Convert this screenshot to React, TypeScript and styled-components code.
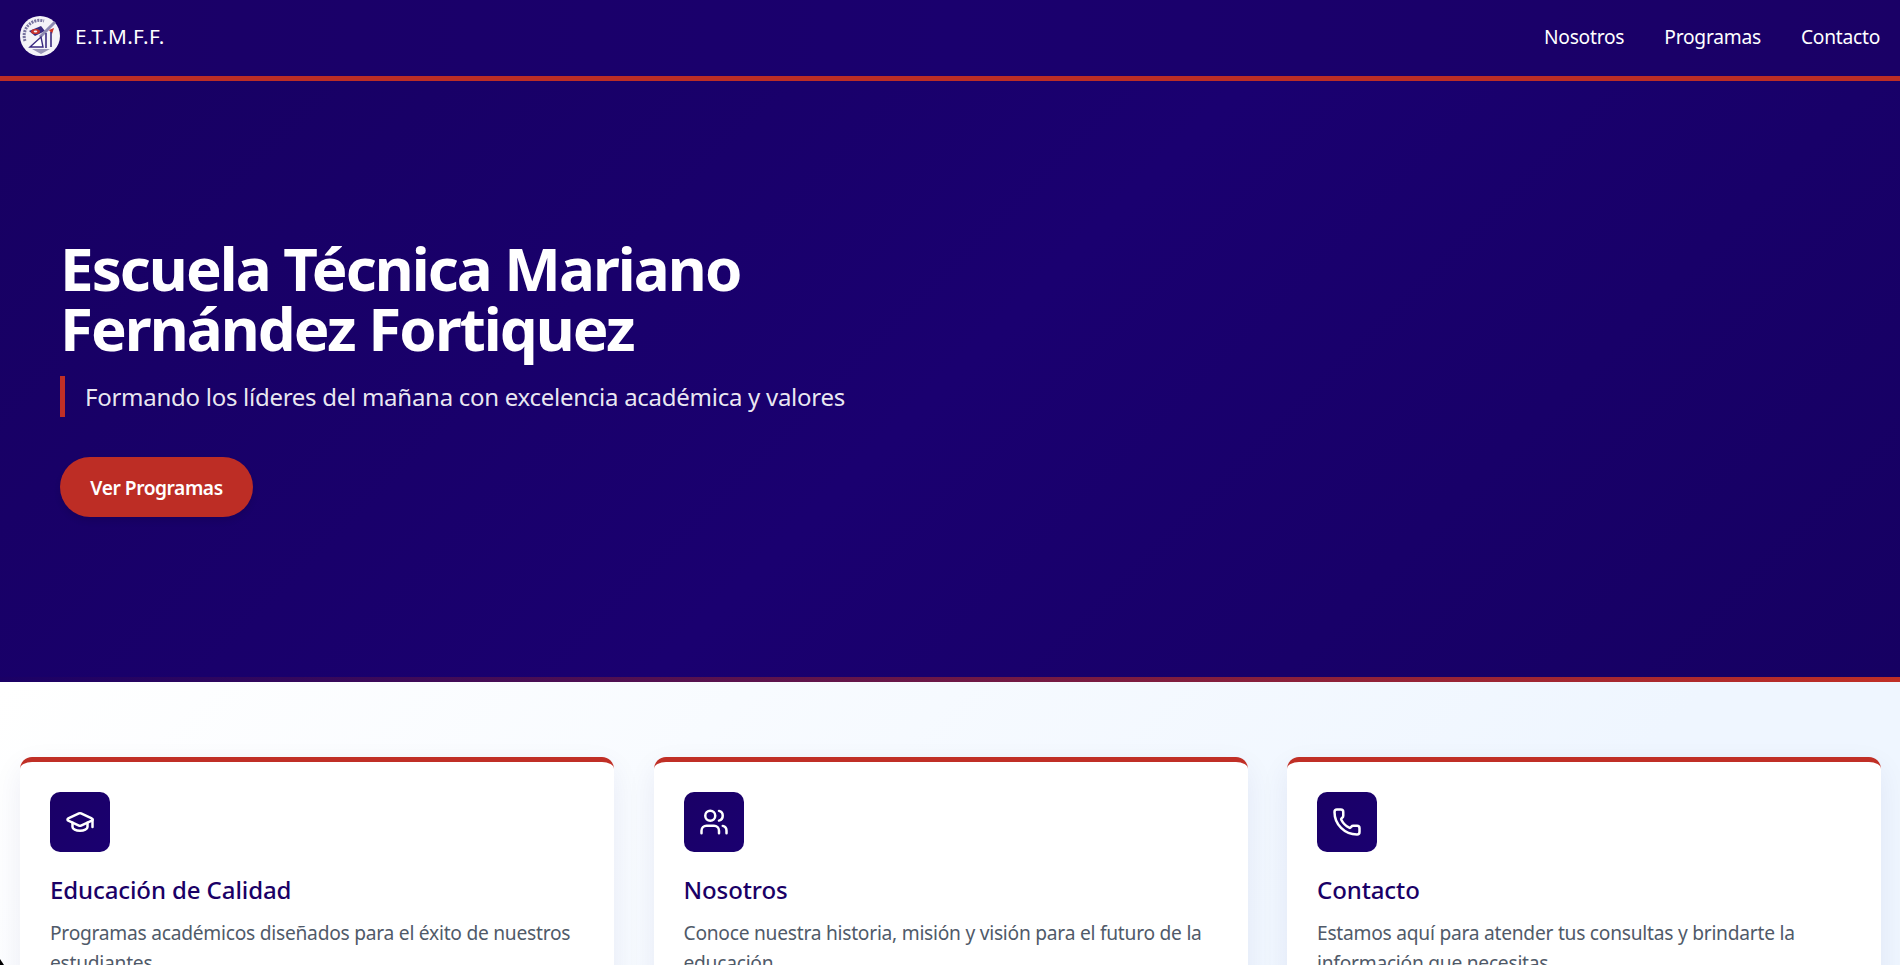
import React from "react";
import styled, { createGlobalStyle } from "styled-components";
import { GraduationCap, Users, Phone } from "lucide-react";

const Global = createGlobalStyle`
  html, body { margin: 0; padding: 0; height: 965px; overflow: hidden; background: #fff; }
  * { box-sizing: border-box; }
  body { font-family: "Noto Sans", "Open Sans", sans-serif; }
`;

const Page = styled.div`
  height: 965px;
  overflow: hidden;
  position: relative;
`;

const Navbar = styled.nav`
  height: 81px;
  border-bottom: 5px solid #bd2d25;
  background: linear-gradient(90deg, #1a0066 0%, #1a006e 50%, #1a0066 100%);
  display: flex;
  align-items: center;
  justify-content: space-between;
  padding: 0 20px 4px;
`;

const Brand = styled.div`
  display: flex;
  align-items: center;
  gap: 15px;
  color: #fff;
  font-size: 20.8px;
  font-weight: 400;
  letter-spacing: 0.35px;
`;

const Logo = styled.svg`
  width: 40px;
  height: 40px;
  display: block;
`;

const NavLinks = styled.div`
  display: flex;
  gap: 40px;
`;

const NavLink = styled.a`
  color: #fff;
  font-size: 19.2px;
  letter-spacing: -0.24px;
`;

const Hero = styled.section`
  height: 596px;
  background: linear-gradient(135deg, #170062 0%, #1a0070 50%, #160062 100%);
  padding: 0 60px 3px;
  display: flex;
  flex-direction: column;
  justify-content: center;
  align-items: flex-start;
`;

const HeroBar = styled.div`
  height: 5px;
  background: linear-gradient(90deg, #1a0066 0%, #c02f26 100%);
`;

const Title = styled.h1`
  margin: 0 0 18px;
  width: 800px;
  color: #fff;
  font-size: 60px;
  line-height: 60px;
  font-weight: 700;
  letter-spacing: -1.95px;
`;

const Subtitle = styled.p`
  margin: 0 0 40px;
  padding: 0 0 0 20px;
  border-left: 5px solid #c02f26;
  color: rgba(255, 255, 255, 0.92);
  font-size: 24px;
  line-height: 41px;
  letter-spacing: -0.27px;
`;

const CTA = styled.a`
  display: flex;
  align-items: center;
  justify-content: center;
  width: 193px;
  height: 60px;
  border-radius: 30px;
  background: #bd2d25;
  color: #fff;
  font-size: 19.2px;
  font-weight: 600;
  letter-spacing: -0.45px;
  box-shadow: 0 4px 6px rgba(0, 0, 0, 0.1);
`;

const Features = styled.section`
  background: linear-gradient(135deg, #ffffff 0%, #eff6ff 75%);
  padding: 75px 0 60px 20px;
  display: grid;
  grid-template-columns: repeat(3, 594px);
  gap: 39.5px;
`;

const Card = styled.article`
  background: #fff;
  border-top: 5px solid #c02f26;
  border-radius: 12px;
  padding: 30px;
  box-shadow: 0 10px 30px rgba(26, 0, 107, 0.07);
`;

const IconBox = styled.div`
  width: 60px;
  height: 60px;
  border-radius: 10px;
  background: linear-gradient(135deg, #1a0066, #1a0070);
  color: #fff;
  display: flex;
  align-items: center;
  justify-content: center;
  margin-bottom: 20px;
`;

const CardTitle = styled.h3`
  margin: 0 0 10px;
  color: #1a0066;
  font-size: 24px;
  line-height: 36px;
  font-weight: 500;
  letter-spacing: -0.1px;
`;

const CardText = styled.p`
  margin: 0;
  color: #505a69;
  font-size: 19.2px;
  line-height: 30px;
  letter-spacing: -0.25px;
`;

const CornerMark = styled.div`
  position: absolute;
  left: 0;
  bottom: 0;
  width: 4px;
  height: 6px;
  background: #000;
  clip-path: polygon(0 0, 100% 100%, 0 100%);
`;

const LogoMark = () => (
  <Logo viewBox="0 0 40 40" aria-hidden>
    <circle cx="20" cy="20" r="20" fill="#f4f3f8" />
    <path d="M5 25 A15.5 15.5 0 0 1 24 5" fill="none" stroke="#77739f" strokeWidth="3" strokeDasharray="2 1" />
    <path d="M9 15 L21 10 L25 15 L15 20 Z" fill="#3a2a80" />
    <ellipse cx="15.5" cy="15.5" rx="4.5" ry="2.6" fill="#c8322a" />
    <ellipse cx="15.5" cy="15.5" rx="1.8" ry="1" fill="#f4f3f8" />
    <path d="M20 21 L35 6" stroke="#8f8bb2" strokeWidth="3" />
    <path d="M29 14 L34 12 L32 18 Z" fill="#c8322a" />
    <path d="M10 31 L21 21 L23 31 Z" fill="#fff" stroke="#3a2a80" strokeWidth="1.4" />
    <path d="M26 17 V32 M31 16 V31" stroke="#3a2a80" strokeWidth="1.6" />
    <path d="M12 33 L30 33 L21 38 Z" fill="#9a96b8" />
  </Logo>
);

const cards = [
  { icon: GraduationCap, title: "Educación de Calidad", text: "Programas académicos diseñados para el éxito de nuestros estudiantes" },
  { icon: Users, title: "Nosotros", text: "Conoce nuestra historia, misión y visión para el futuro de la educación" },
  { icon: Phone, title: "Contacto", text: "Estamos aquí para atender tus consultas y brindarte la información que necesitas" },
];

export default function App() {
  return (
    <Page>
      <Global />
      <Navbar>
        <Brand>
          <LogoMark />
          E.T.M.F.F.
        </Brand>
        <NavLinks>
          <NavLink>Nosotros</NavLink>
          <NavLink>Programas</NavLink>
          <NavLink>Contacto</NavLink>
        </NavLinks>
      </Navbar>
      <Hero>
        <Title>Escuela Técnica Mariano Fernández Fortiquez</Title>
        <Subtitle>Formando los líderes del mañana con excelencia académica y valores</Subtitle>
        <CTA>Ver Programas</CTA>
      </Hero>
      <HeroBar />
      <Features>
        {cards.map((c) => (
          <Card key={c.title}>
            <IconBox>
              <c.icon size={30} strokeWidth={2} />
            </IconBox>
            <CardTitle>{c.title}</CardTitle>
            <CardText>{c.text}</CardText>
          </Card>
        ))}
      </Features>
      <CornerMark />
    </Page>
  );
}
